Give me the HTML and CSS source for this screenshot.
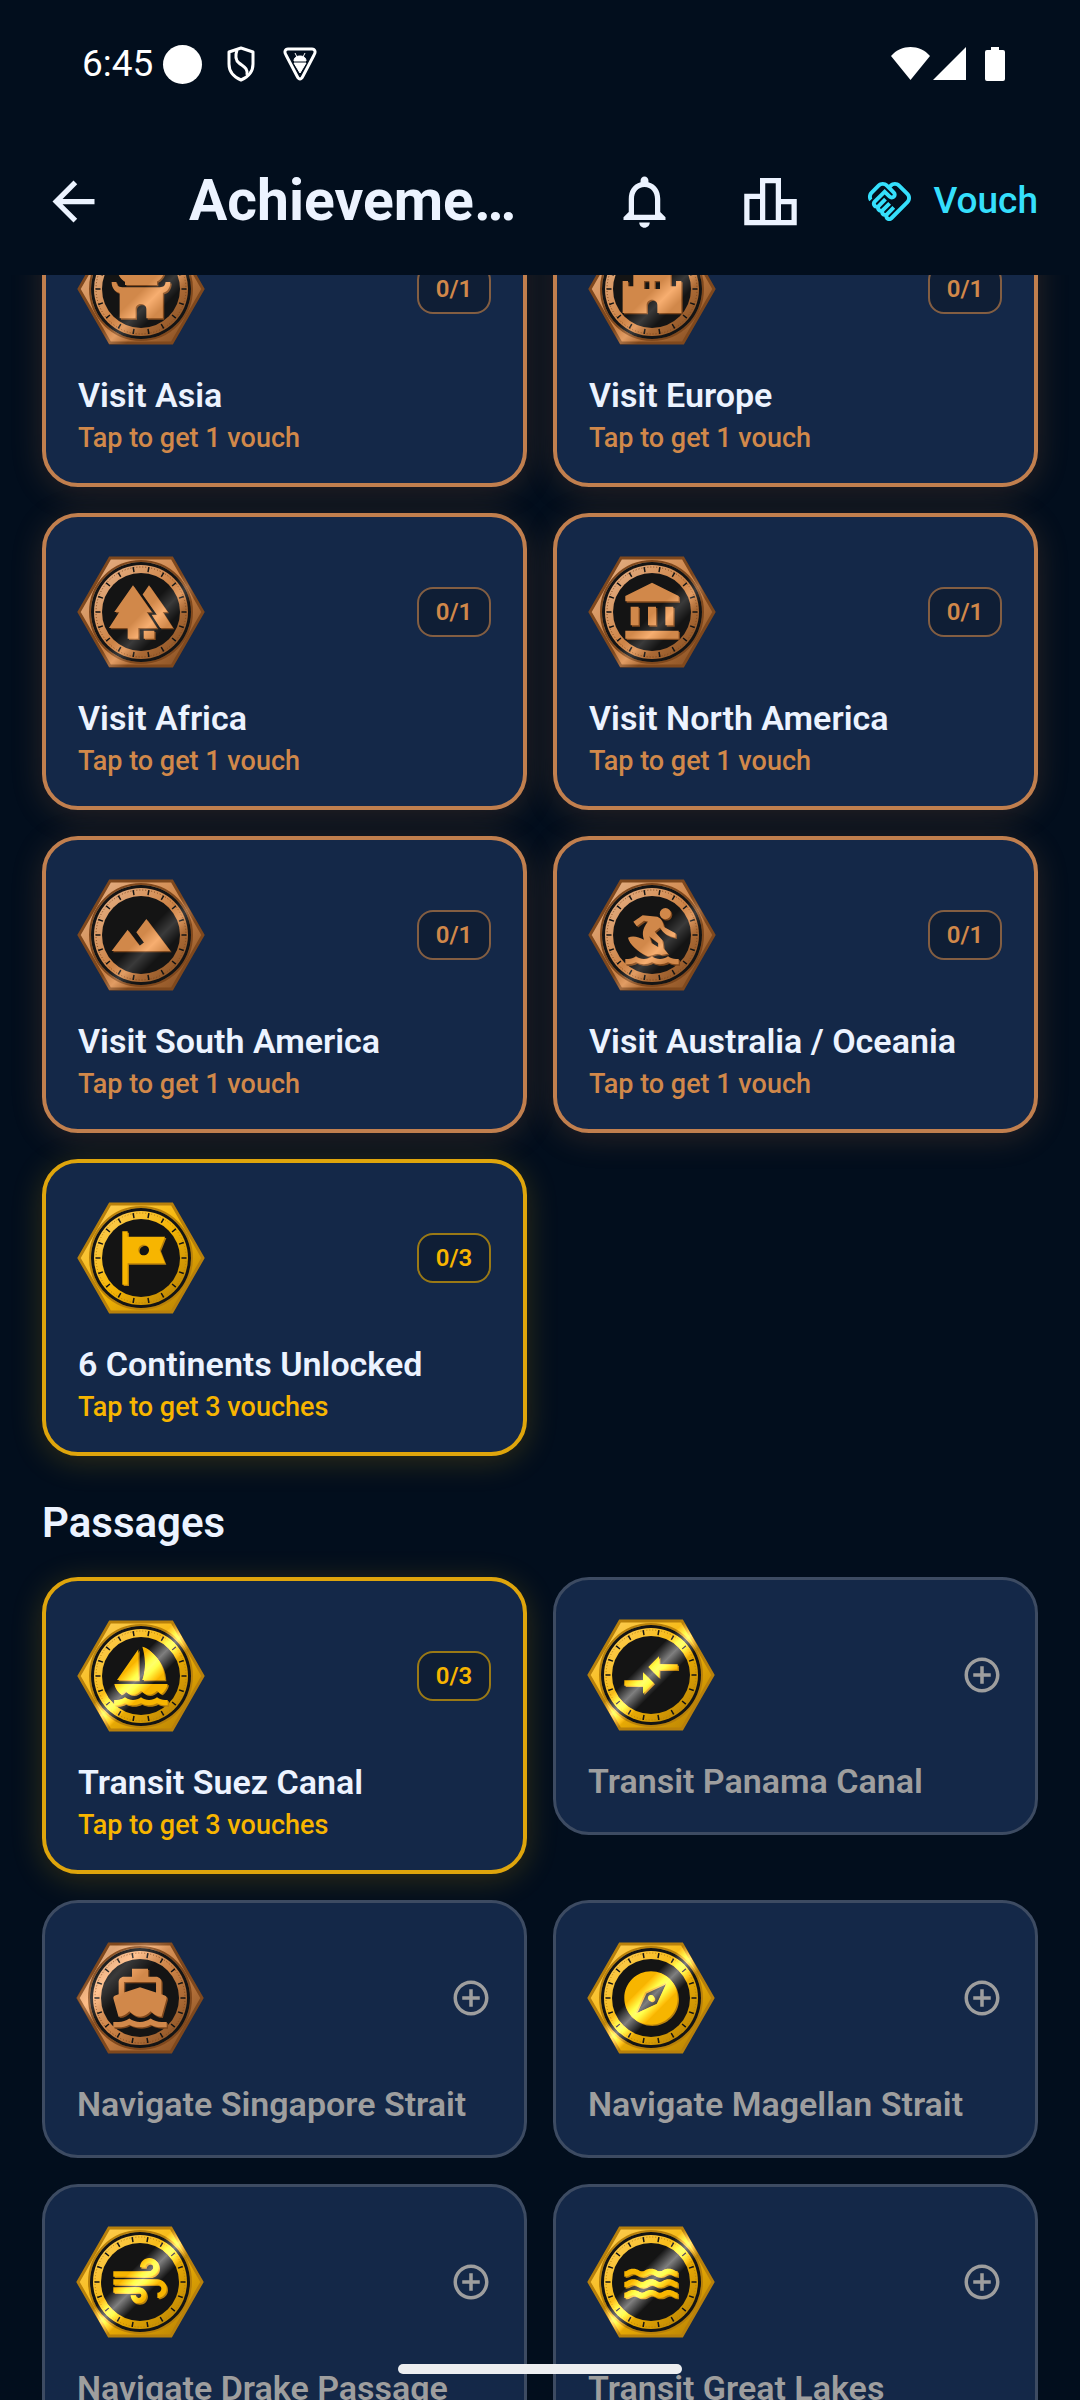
FILE: index.html
```html
<!DOCTYPE html>
<html lang="en">
<head>
<meta charset="utf-8">
<meta name="viewport" content="width=device-width, initial-scale=1">
<title>Achievements</title>
<link rel="stylesheet" href="styles.css">
</head>
<body>

<svg class="sprite" aria-hidden="true">
  <defs>
    <linearGradient id="bronze" x1="0" y1="0" x2="1" y2="1">
      <stop offset=".1" stop-color="#e2ac80"/><stop offset=".5" stop-color="#ce8447"/><stop offset=".9" stop-color="#8d5426"/>
    </linearGradient>
    <linearGradient id="gold" x1="0" y1="0" x2="1" y2="1">
      <stop offset=".1" stop-color="#fccb50"/><stop offset=".5" stop-color="#f6b605"/><stop offset=".9" stop-color="#bd8603"/>
    </linearGradient>
    <linearGradient id="shine-soft" gradientUnits="userSpaceOnUse" x1="1" y1="1" x2="20" y2="20">
      <stop offset="0" stop-color="#fff" stop-opacity="0"/><stop offset=".5" stop-color="#fff" stop-opacity=".15"/><stop offset="1" stop-color="#fff" stop-opacity="0"/>
    </linearGradient>
    <linearGradient id="shine-high" gradientUnits="userSpaceOnUse" x1="-38" y1="-38" x2="-10" y2="-10">
      <stop offset="0" stop-color="#fff" stop-opacity="0"/><stop offset=".5" stop-color="#fff" stop-opacity=".15"/><stop offset="1" stop-color="#fff" stop-opacity="0"/>
    </linearGradient>
    <linearGradient id="shine-bright" gradientUnits="userSpaceOnUse" x1="-10" y1="-10" x2="10" y2="10">
      <stop offset="0" stop-color="#fff" stop-opacity="0"/><stop offset=".5" stop-color="#fff" stop-opacity=".42"/><stop offset="1" stop-color="#fff" stop-opacity="0"/>
    </linearGradient>

    <g id="medal">
      <path class="medal-face" d="M-62 0-31-54H31L62 0 31 54H-31Z"/>
      <circle class="medal-halo" r="51"/>
      <circle class="medal-dark" r="50"/>
      <circle class="medal-ring" r="47"/>
      <circle class="medal-line" r="45"/>
      <circle class="medal-ticks" r="43" pathLength="180"/>
      <circle class="medal-dark" r="39"/>
    </g>
    <path id="hex" d="M-63 0-32-55H32L63 0 32 55H-32Z"/>

    <path id="i-temple" d="M12 1 6 4 3 4C3 6.500 4.500 8.500 6 9.200V10.500H18V9.200C19.500 8.500 21 6.500 21 4H18ZM1 9.400H2.800C3 10.800 3.500 11.300 5 11.300H19C20.500 11.300 21 10.800 21.200 9.400H23C23 11.500 22 13 20.200 13.500V23H14V19.500C14 17 10 17 10 19.500V23H4V13.500C2 13 1 11.500 1 9.400Z"/>
    <path id="i-castle" d="M21 9v2h-2V3h-2v2h-2V3h-2v2h-2V3H9v2H7V3H5v8H3V9H1v12h9v-3c0-1.100.9-2 2-2s2 .9 2 2v3h9V9h-2zm-10 3H9V9h2v3zm4 0h-2V9h2v3z"/>
    <path id="i-forest" d="M16 12 9 2 2 12h1.860L0 18h7v4h4v-4h7l-3.860-6zM20.140 12H22L15 2l-2.390 3.410L17.920 13h-1.950l3.220 5H24l-3.860-6zM13 19h4v3h-4z"/>
    <path id="i-bank" d="M4 10v7h3v-7H4zm6.500 0v7h3v-7h-3zM2 22h20v-3H2v3zm15-12v7h3v-7h-3zM12 1 2 6v2h20V6L12 1z"/>
    <path id="i-mountain" d="m14 6-3.750 5 2.850 3.800-1.600 1.200C9.810 13.750 7 10 7 10l-6 8h22L14 6z"/>
    <g id="i-surf">
      <path d="M21 23c-1.030 0-2.060-.25-3-.75-1.890 1-4.110 1-6 0-1.890 1-4.110 1-6 0-.95.5-1.970.75-3 .75H2v-2h1c1.040 0 2.080-.35 3-1 1.830 1.300 4.170 1.300 6 0 1.830 1.300 4.170 1.300 6 0 .91.65 1.960 1 3 1h1v2z"/>
      <circle cx="17" cy="4" r="2.100"/>
      <path d="M5 7 8.500 4.600 14 5.200C15.500 5.800 16 7 16.500 9L20.800 11.300V13C18 12.600 16 11.200 15 9.200L13 10.800 15.900 14 16.300 17 18 19 15.500 19.500C14 18.500 12.500 19.500 10.500 20 7 18.500 3.500 15.500 3 13 5 12 7 12.800 9 13.800 8.500 12 8 10 10.500 6.900L9 6.700 6.300 8.700ZM11 12.500 11.800 15 14.300 16.500V15Z" fill-rule="evenodd"/>
    </g>
    <path id="i-flag" d="M21 4H7V2H5v20h2v-8h14l-2-5 2-5zm-6 5c0 1.100-.9 2-2 2s-2-.9-2-2 .9-2 2-2 2 .9 2 2z"/>
    <path id="i-sail" d="M11 13.500V2L3 13.500h8zm10 0C21 6.500 14.500 1 12.500 1c0 0 1 3 1 6.500s-1 6-1 6H21zm1 1.500H2c.31 1.530 1.160 2.840 2.330 3.730.65-.27 1.220-.72 1.670-1.230.73.84 1.800 1.500 3 1.500s2.270-.66 3-1.500c.73.84 1.800 1.500 3 1.500s2.260-.66 3-1.500c.45.51 1.020.96 1.670 1.230C20.840 17.840 21.690 16.530 22 15zm0 8v-2h-1c-1.040 0-2.080-.35-3-1-1.830 1.300-4.170 1.300-6 0-1.830 1.300-4.170 1.300-6 0-.91.65-1.960 1-3 1H2v2h1c1.030 0 2.050-.25 3-.75 1.890 1 4.110 1 6 0 1.890 1 4.110 1 6 0 .95.5 1.970.75 3 .75h1z"/>
    <path id="i-arrows" d="M9.010 14H2v2h7.010v3L13 15l-3.990-4v3zm5.980-1v-3H22V8h-7.010V5L11 9l3.990 4z"/>
    <path id="i-boat" d="M20 21c-1.390 0-2.780-.47-4-1.320-2.440 1.710-5.560 1.710-8 0C6.780 20.530 5.390 21 4 21H2v2h2c1.380 0 2.740-.35 4-.99 2.520 1.290 5.480 1.290 8 0 1.260.65 2.620.99 4 .99h2v-2h-2zM3.950 19H4c1.600 0 3.020-.88 4-2 .98 1.120 2.400 2 4 2s3.020-.88 4-2c.98 1.120 2.400 2 4 2h.05l1.890-6.680c.08-.26.06-.54-.06-.78s-.34-.42-.6-.5L20 10.620V6c0-1.100-.9-2-2-2h-3V1H9v3H6c-1.100 0-2 .9-2 2v4.620l-1.290.42c-.26.08-.48.26-.6.5s-.15.52-.06.78L3.950 19zM6 6h12v3.970L12 8 6 9.970V6z"/>
    <path id="i-compass" d="M12 10.900c-.61 0-1.100.49-1.100 1.100s.49 1.100 1.100 1.100c.61 0 1.100-.49 1.100-1.100s-.49-1.100-1.100-1.100zM12 2C6.480 2 2 6.480 2 12s4.480 10 10 10 10-4.480 10-10S17.520 2 12 2zm2.190 12.190L6 18l3.810-8.190L18 6l-3.810 8.190z"/>
    <path id="i-air" d="M14.500 17c0 1.650-1.350 3-3 3s-3-1.350-3-3h2c0 .55.45 1 1 1s1-.45 1-1-.45-1-1-1H2v-2h9.500c1.650 0 3 1.350 3 3zM19 6.500C19 4.570 17.430 3 15.500 3S12 4.570 12 6.500h2c0-.83.67-1.500 1.500-1.500s1.500.67 1.500 1.500S16.330 8 15.500 8H2v2h13.500c1.930 0 3.500-1.570 3.500-3.500zm-.5 4.500H2v2h16.500c.83 0 1.500.67 1.500 1.500s-.67 1.500-1.500 1.500v2c1.930 0 3.500-1.570 3.500-3.500S20.430 11 18.500 11z"/>
    <path id="wave" d="M5.350 13c1.190 0 1.420 1 3.330 1 1.950 0 2.090-1 3.330-1 1.190 0 1.420 1 3.330 1 1.950 0 2.090-1 3.330-1 1.190 0 1.400.98 3.310 1v-2c-1.190 0-1.420-1-3.330-1-1.950 0-2.090 1-3.330 1-1.190 0-1.420-1-3.330-1-1.950 0-2.090 1-3.330 1-1.190 0-1.420-1-3.330-1-1.950 0-2.090 1-3.330 1v2c1.900 0 2.170-1 3.350-1z"/>
    <g id="i-water"><use href="#wave" y="-4"/><use href="#wave"/><use href="#wave" y="4"/></g>
    <path id="i-plus" d="M13 7h-2v4H7v2h4v4h2v-4h4v-2h-4V7zm-1-5C6.480 2 2 6.480 2 12s4.480 10 10 10 10-4.480 10-10S17.520 2 12 2zm0 18c-4.410 0-8-3.590-8-8s3.590-8 8-8 8 3.590 8 8-3.590 8-8 8z"/>
  </defs>
</svg>

<header class="top">
  <div class="status">
    <div class="status-group">
      <span class="clock">6:45</span>
      <span class="dot"></span>
      <svg class="shield" width="30" height="36" viewBox="0 0 30 36" aria-hidden="true">
        <path d="M15 2 27 6V18C27 26 22 31 15 34 8 31 3 26 3 18V6Z" fill="none" stroke="#fff" stroke-width="3" stroke-linejoin="round"/>
        <path d="M11 4C9 10 9 14 13 17 18 21 22 22 21 29" fill="none" stroke="#fff" stroke-width="3"/>
      </svg>
      <svg class="guard" width="34" height="34" viewBox="0 0 34 34" aria-hidden="true">
        <path d="M5 2H29C32 2 33 5 31 8L20 29C18 33 16 33 14 29L3 8C1 5 2 2 5 2Z" fill="none" stroke="#fff" stroke-width="3"/>
        <path d="M11 14C11 11 13 9 17 9S23 11 23 14ZM11 16H23L17 26ZM12 6 14 10M22 6 20 10" fill="#fff" stroke="#fff"/>
      </svg>
    </div>
    <div class="status-group signals">
      <svg width="39" height="34" viewBox="0 0 39 34" aria-hidden="true"><path d="M0 9C10-3 29-3 39 9L19.500 33Z" fill="#fff"/></svg>
      <svg width="33" height="34" viewBox="0 0 33 34" aria-hidden="true"><path d="M33 0V33H0Z" fill="#fff"/></svg>
      <svg class="battery" width="20" height="34" viewBox="0 0 20 34" aria-hidden="true"><path d="M6 0H14V3H18Q20 3 20 5V32Q20 34 18 34H2Q0 34 0 32V5Q0 3 2 3H6Z" fill="#fff"/></svg>
    </div>
  </div>
  <nav class="bar">
    <button class="icon-button back" aria-label="Back"><svg viewBox="0 0 24 24"><path d="M20 11H7.830l5.590-5.590L12 4l-8 8 8 8 1.410-1.410L7.830 13H20v-2z"/></svg></button>
    <h1 class="title">Achievements</h1>
    <button class="icon-button" aria-label="Notifications"><svg viewBox="0 0 24 24"><path d="M12 22c1.100 0 2-.9 2-2h-4c0 1.100.9 2 2 2zm6-6v-5c0-3.070-1.630-5.640-4.500-6.320V4c0-.83-.67-1.500-1.500-1.500s-1.500.67-1.500 1.500v.68C7.640 5.360 6 7.920 6 11v5l-2 2v1h16v-1l-2-2zm-2 1H8v-6c0-2.480 1.510-4.500 4-4.500s4 2.020 4 4.500v6z"/></svg></button>
    <button class="icon-button" aria-label="Leaderboard"><svg viewBox="0 0 24 24"><path d="M16 11V3H8v6H2v12h20V11h-6zm-6-6h4v14h-4V5zm-6 6h4v8H4v-8zm16 8h-4v-6h4v6z"/></svg></button>
    <button class="vouch"><svg viewBox="0 0 24 24" aria-hidden="true"><path d="M12.220 19.850c-.18.18-.5.21-.71 0-.18-.18-.21-.5 0-.71l3.390-3.390-1.410-1.410-3.390 3.390c-.19.2-.51.19-.71 0-.21-.21-.18-.53 0-.71l3.390-3.390-1.410-1.410-3.390 3.390c-.18.18-.5.21-.71 0-.19-.19-.19-.51 0-.71l3.390-3.390-1.420-1.410-3.390 3.390c-.18.18-.5.21-.71 0-.19-.2-.19-.51 0-.71L9.520 8.400l1.870 1.860c.95.95 2.590.94 3.540 0 .98-.98.98-2.560 0-3.540l-1.860-1.860.28-.28c.78-.78 2.050-.78 2.830 0l4.240 4.240c.78.78.78 2.050 0 2.830l-8.200 8.200zm9.610-6.780c1.560-1.560 1.560-4.090 0-5.660l-4.240-4.240c-1.560-1.560-4.090-1.560-5.660 0l-.28.28-.28-.28c-1.560-1.560-4.090-1.560-5.660 0L2.170 6.710C.75 8.130.62 10.340 1.770 11.900l1.450-1.450c-.39-.75-.26-1.700.37-2.330l3.540-3.540c.78-.78 2.050-.78 2.830 0l3.560 3.560c.18.18.21.5 0 .71-.21.21-.53.18-.71 0L9.520 5.570l-5.800 5.790c-.98.97-.98 2.560 0 3.540.39.39.89.63 1.420.7.07.52.3 1.020.7 1.420.4.4.9.63 1.420.7.07.52.3 1.020.7 1.420.4.4.9.63 1.420.7.07.54.31 1.030.7 1.420.47.47 1.100.73 1.770.73.67 0 1.300-.26 1.770-.73l8.210-8.190z"/></svg>Vouch</button>
  </nav>
</header>

<main class="content">
  <section class="grid scrolled" aria-label="Continents">
    <button class="card open bronze">
      <span class="row"><svg class="medal" viewBox="-63 -63 126 126" aria-hidden="true"><use href="#medal"/><g class="glyph"><use class="under" href="#i-temple" x=".5" y=".5"/><use href="#i-temple"/></g><use class="shine" href="#hex" fill="url(#shine-soft)"/></svg><span class="count">0/1</span></span>
      <span class="name">Visit Asia</span><span class="hint">Tap to get 1 vouch</span>
    </button>
    <button class="card open bronze">
      <span class="row"><svg class="medal" viewBox="-63 -63 126 126" aria-hidden="true"><use href="#medal"/><g class="glyph"><use class="under" href="#i-castle" x=".5" y=".5"/><use href="#i-castle"/></g><use class="shine" href="#hex" fill="url(#shine-soft)"/></svg><span class="count">0/1</span></span>
      <span class="name">Visit Europe</span><span class="hint">Tap to get 1 vouch</span>
    </button>
    <button class="card open bronze">
      <span class="row"><svg class="medal" viewBox="-63 -63 126 126" aria-hidden="true"><use href="#medal"/><g class="glyph"><use class="under" href="#i-forest" x=".5" y=".5"/><use href="#i-forest"/></g><use class="shine" href="#hex" fill="url(#shine-soft)"/></svg><span class="count">0/1</span></span>
      <span class="name">Visit Africa</span><span class="hint">Tap to get 1 vouch</span>
    </button>
    <button class="card open bronze">
      <span class="row"><svg class="medal" viewBox="-63 -63 126 126" aria-hidden="true"><use href="#medal"/><g class="glyph"><use class="under" href="#i-bank" x=".5" y=".5"/><use href="#i-bank"/></g><use class="shine" href="#hex" fill="url(#shine-soft)"/></svg><span class="count">0/1</span></span>
      <span class="name">Visit North America</span><span class="hint">Tap to get 1 vouch</span>
    </button>
    <button class="card open bronze">
      <span class="row"><svg class="medal" viewBox="-63 -63 126 126" aria-hidden="true"><use href="#medal"/><g class="glyph"><use class="under" href="#i-mountain" x=".5" y=".5"/><use href="#i-mountain"/></g><use class="shine" href="#hex" fill="url(#shine-soft)"/></svg><span class="count">0/1</span></span>
      <span class="name">Visit South America</span><span class="hint">Tap to get 1 vouch</span>
    </button>
    <button class="card open bronze">
      <span class="row"><svg class="medal" viewBox="-63 -63 126 126" aria-hidden="true"><use href="#medal"/><g class="glyph"><use class="under" href="#i-surf" x=".5" y=".5"/><use href="#i-surf"/></g><use class="shine" href="#hex" fill="url(#shine-soft)"/></svg><span class="count">0/1</span></span>
      <span class="name">Visit Australia / Oceania</span><span class="hint">Tap to get 1 vouch</span>
    </button>
    <button class="card open gold">
      <span class="row"><svg class="medal" viewBox="-63 -63 126 126" aria-hidden="true"><use href="#medal"/><g class="glyph"><use class="under" href="#i-flag" x=".5" y=".5"/><use href="#i-flag"/></g></svg><span class="count">0/3</span></span>
      <span class="name">6 Continents Unlocked</span><span class="hint">Tap to get 3 vouches</span>
    </button>
  </section>

  <h2 class="heading">Passages</h2>
  <section class="grid" aria-label="Passages">
    <button class="card open gold">
      <span class="row"><svg class="medal" viewBox="-63 -63 126 126" aria-hidden="true"><use href="#medal"/><g class="glyph"><use class="under" href="#i-sail" x=".5" y=".5"/><use href="#i-sail"/></g><use class="shine" href="#hex" fill="url(#shine-bright)"/></svg><span class="count">0/3</span></span>
      <span class="name">Transit Suez Canal</span><span class="hint">Tap to get 3 vouches</span>
    </button>
    <button class="card gold">
      <span class="row"><svg class="medal" viewBox="-63 -63 126 126" aria-hidden="true"><use href="#medal"/><g class="glyph"><use class="under" href="#i-arrows" x=".5" y=".5"/><use href="#i-arrows"/></g><use class="shine" href="#hex" fill="url(#shine-bright)"/></svg><svg class="plus" viewBox="0 0 24 24" aria-hidden="true"><use href="#i-plus"/></svg></span>
      <span class="name">Transit Panama Canal</span>
    </button>
    <button class="card bronze">
      <span class="row"><svg class="medal" viewBox="-63 -63 126 126" aria-hidden="true"><use href="#medal"/><g class="glyph"><use class="under" href="#i-boat" x=".5" y=".5"/><use href="#i-boat"/></g><use class="shine" href="#hex" fill="url(#shine-high)"/></svg><svg class="plus" viewBox="0 0 24 24" aria-hidden="true"><use href="#i-plus"/></svg></span>
      <span class="name">Navigate Singapore Strait</span>
    </button>
    <button class="card gold">
      <span class="row"><svg class="medal" viewBox="-63 -63 126 126" aria-hidden="true"><use href="#medal"/><g class="glyph"><use class="under" href="#i-compass" x=".5" y=".5"/><use href="#i-compass"/></g><use class="shine" href="#hex" fill="url(#shine-bright)"/></svg><svg class="plus" viewBox="0 0 24 24" aria-hidden="true"><use href="#i-plus"/></svg></span>
      <span class="name">Navigate Magellan Strait</span>
    </button>
    <button class="card gold">
      <span class="row"><svg class="medal" viewBox="-63 -63 126 126" aria-hidden="true"><use href="#medal"/><g class="glyph"><use class="under" href="#i-air" x=".5" y=".5"/><use href="#i-air"/></g><use class="shine" href="#hex" fill="url(#shine-bright)"/></svg><svg class="plus" viewBox="0 0 24 24" aria-hidden="true"><use href="#i-plus"/></svg></span>
      <span class="name">Navigate Drake Passage</span>
    </button>
    <button class="card gold">
      <span class="row"><svg class="medal" viewBox="-63 -63 126 126" aria-hidden="true"><use href="#medal"/><g class="glyph"><use class="under" href="#i-water" x=".5" y=".5"/><use href="#i-water"/></g><use class="shine" href="#hex" fill="url(#shine-bright)"/></svg><svg class="plus" viewBox="0 0 24 24" aria-hidden="true"><use href="#i-plus"/></svg></span>
      <span class="name">Transit Great Lakes</span>
    </button>
  </section>
</main>
<div class="home-pill"></div>
</body>
</html>
```
FILE: styles.css
```css
* { box-sizing: border-box; }

body {
  margin: 0;
  height: 100vh;
  display: flex;
  flex-direction: column;
  overflow: hidden;
  background: #020e1d;
  color: #ecf3ff;
  font-family: Roboto, sans-serif;
}

button {
  margin: 0;
  padding: 0;
  border: 0;
  background: none;
  color: inherit;
  font: inherit;
  text-align: left;
  cursor: pointer;
}

h1, h2 { margin: 0; }

.sprite { position: absolute; width: 0; height: 0; }

/* Status bar and app bar */
.top { flex: none; padding-bottom: 26px; }

.status {
  display: flex;
  justify-content: space-between;
  align-items: center;
  height: 128px;
  padding: 0 75px 0 82px;
  color: #fff;
}
.status-group { display: flex; align-items: center; }
.clock { font-size: 37px; line-height: 44px; }
.dot { width: 39px; height: 39px; margin-left: 10px; border-radius: 50%; background: #fff; }
.shield { margin-left: 24px; }
.guard { margin-left: 27px; }
.signals { gap: 3px; }
.battery { margin-left: 16px; }

.bar {
  display: flex;
  align-items: center;
  height: 121px;
  padding: 25px 42px 0;
}
.icon-button {
  flex: none;
  display: flex;
  justify-content: center;
  width: 126px;
}
.icon-button svg { width: 63px; height: 63px; fill: currentColor; }
.icon-button.back { width: 63px; }
.title {
  flex: 1;
  min-width: 0;
  margin: 0 48px 0 84px;
  overflow: hidden;
  white-space: nowrap;
  text-overflow: ellipsis;
  font-size: 57px;
  line-height: 72px;
  font-weight: 700;
}
.vouch {
  display: flex;
  align-items: center;
  gap: 21px;
  margin-left: 32px;
  color: #35dffc;
  font-size: 37px;
  line-height: 48px;
  font-weight: 500;
}
.vouch svg { width: 47px; height: 47px; fill: currentColor; }

/* Achievement lists */
.content { flex: 1; min-height: 0; overflow: hidden; padding: 0 42px; }

.grid {
  display: grid;
  grid-template-columns: 1fr 1fr;
  gap: 26px;
  align-items: start;
}
.scrolled { margin-top: -85px; }

.heading {
  padding: 43px 0 30px;
  font-size: 42px;
  line-height: 48px;
  font-weight: 600;
}

.card {
  display: flex;
  flex-direction: column;
  padding: 32px;
  border: 3px solid #3d4b62;
  border-radius: 36px;
  background: #142848;
  color: #9e9e9e;
}
.card.open { border-width: 4px; color: #ecf3ff; }

.bronze { --face: url(#bronze); --edge: #7f481d; --tone: #d1884a; }
.gold { --face: url(#gold); --edge: #b8800b; --tone: #f7b500; }
.open.bronze { border-color: #c17f4e; box-shadow: 0 5px 32px rgb(205 127 70 / 20%); }
.open.gold { border-color: #dfa50c; box-shadow: 0 5px 32px rgb(247 181 0 / 20%); }

.row { display: flex; align-items: center; justify-content: space-between; margin-bottom: 24px; }
.name { font-size: 34px; line-height: 38px; font-weight: 600; white-space: nowrap; }
.hint { margin-top: 12px; color: var(--tone); font-size: 27px; line-height: 25px; font-weight: 500; }

.count {
  width: 74px;
  border: 2px solid color-mix(in srgb, var(--tone) 60%, #0f1e35);
  border-radius: 16px;
  background: #0f1e35;
  color: var(--tone);
  font-size: 24px;
  line-height: 46px;
  font-weight: 600;
  text-align: center;
}
.plus { width: 42px; height: 42px; fill: currentColor; }

/* Hexagonal medals */
.medal { width: 126px; height: 126px; overflow: visible; isolation: isolate; }
.medal-face { fill: var(--face); stroke: var(--edge); stroke-width: 3px; }
.medal-halo { fill: none; stroke: var(--edge); stroke-width: 2px; }
.medal-dark { fill: #141414; }
.medal-ring { fill: var(--face); }
.medal-line { fill: none; stroke: var(--edge); stroke-width: 1px; stroke-dasharray: 1 2; }
.medal-ticks { fill: none; stroke: #141414; stroke-width: 5px; stroke-dasharray: 1 9; stroke-dashoffset: .5; }
.glyph { fill: var(--tone); transform: scale(2.67) translate(-12px, -12px); }
.under { fill: var(--edge); }
.shine { mix-blend-mode: plus-lighter; }

.home-pill {
  position: fixed;
  left: 50%;
  bottom: 26px;
  width: 284px;
  height: 10px;
  margin-left: -142px;
  border-radius: 5px;
  background: #eceef1;
}
```
